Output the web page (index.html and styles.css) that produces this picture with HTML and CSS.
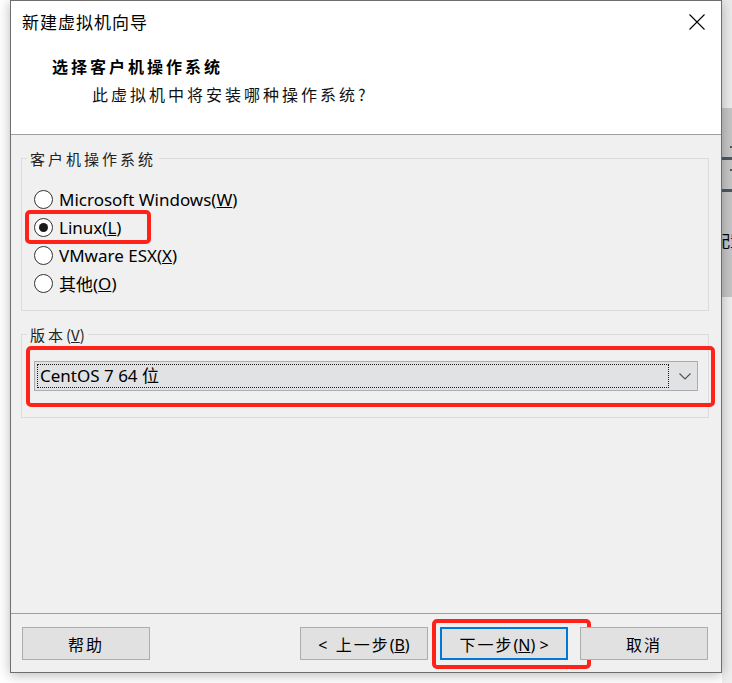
FILE: index.html
```html
<!DOCTYPE html>
<html lang="zh-CN">
  <head>
    <meta charset="utf-8" />

    <link rel="stylesheet" href="styles.css">
  </head>

  <body>
    <div class="screen">
      <div class="dialog">
        <div class="header">
          <div class="titlebar">
            <span class="title">新建虚拟机向导</span>
            <svg class="close" width="16" height="16" viewBox="0 0 16 16">
              <path d="M0.5 0.5 L15.5 15.5 M15.5 0.5 L0.5 15.5" stroke="#000" stroke-width="1.1" fill="none" />
            </svg>
          </div>
          <h1 class="heading">选择客户机操作系统</h1>
          <p class="subheading">此虚拟机中将安装哪种操作系统<span class="latin">?</span></p>
        </div>

        <div class="content">
          <div class="group">
            <div class="groupLabel">客户机操作系统</div>
            <div class="radioList">
              <div class="radioRow"><span class="radio"></span>Microsoft Windows(<u>W</u>)</div>
              <div class="radioRow"><span class="radio checked"></span>Linux(<u>L</u>)<span class="mark markLinux"></span></div>
              <div class="radioRow"><span class="radio"></span>VMware ESX(<u>X</u>)</div>
              <div class="radioRow"><span class="radio"></span>其他(<u>O</u>)</div>
            </div>
          </div>

          <div class="group version">
            <div class="groupLabel">版本<span class="latin">(<u>V</u>)</span></div>
            <div class="select">
              <div class="selectValue">CentOS 7 64 位</div>
              <svg class="chevron" width="12" height="7" viewBox="0 0 12 7">
                <path d="M0.5 0.5 L6 6 L11.5 0.5" stroke="#555" stroke-width="1.2" fill="none" />
              </svg>
              <span class="mark markSelect"></span>
            </div>
          </div>
        </div>

        <div class="footer">
          <button class="btn">帮助</button>
          <div class="spacer"></div>
          <button class="btn">&lt; 上一步<span class="latin">(<u>B</u>)</span></button>
          <button class="btn primary">下一步<span class="latin">(<u>N</u>) &gt;</span><span class="mark markNext"></span></button>
          <button class="btn">取消</button>
        </div>
      </div>

      <!-- window behind the dialog, only a sliver shows -->
      <div class="behind">
        <div class="behindTop"></div>
        <div class="behindMid">
          <div class="dot dot1"></div>
          <div class="stripe stripe1"></div>
          <div class="dot dot2"></div>
          <div class="stripe stripe2"></div>
          <div class="behindText">配置</div>
        </div>
        <div class="behindBottom"></div>
      </div>
    </div>
  </body>
</html>
```

FILE: styles.css
```css
body {
  margin: 0;
  background-color: #ffffff;
  font-family: "Noto Sans", "Noto Sans CJK SC", sans-serif;
  color: #000;
}

.screen {
  display: flex;
  width: 732px;
  height: 683px;
  padding-left: 10px;
  box-sizing: border-box;
  overflow: hidden;
}

.latin {
  letter-spacing: 0;
}

.dialog {
  position: relative;
  z-index: 1;
  flex-shrink: 0;
  display: flex;
  flex-direction: column;
  width: 712px;
  height: 673px;
  box-sizing: border-box;
  border: 1px solid #6e6e6e;
  background-color: #f0f0f0;
  box-shadow: 0 2px 12px rgba(0, 0, 0, 0.28);
}

/* header */
.header {
  height: 134px;
  box-sizing: border-box;
  background-color: #ffffff;
  border-bottom: 1px solid #a0a0a0;
}
.titlebar {
  display: flex;
  align-items: center;
  justify-content: space-between;
  height: 42px;
  padding: 0 16px 0 11px;
}
.title {
  font-family: "Noto Sans CJK SC", sans-serif;
  font-size: 17px;
  letter-spacing: 1px;
  line-height: 42px;
}
.close {
  display: block;
}
.heading {
  margin: 12px 0 0 41px;
  font-family: "Noto Sans CJK SC", sans-serif;
  font-size: 16px;
  font-weight: 700;
  letter-spacing: 3px;
  line-height: 22px;
}
.subheading {
  margin: 6px 0 0 81px;
  font-family: "Noto Sans CJK SC", sans-serif;
  font-size: 16px;
  letter-spacing: 3px;
  line-height: 22px;
  color: #111;
}

/* content */
.content {
  flex: 1;
}
.group {
  margin: 23px 12px 0 10px;
  border: 1px solid #dcdcdc;
  padding-bottom: 13px;
}
.groupLabel {
  display: table;
  margin: -10px 0 0 5px;
  padding: 0 3px;
  background-color: #f0f0f0;
  font-family: "Noto Sans CJK SC", sans-serif;
  font-size: 15px;
  letter-spacing: 3px;
  line-height: 20px;
  color: #222;
}
.radioList {
  padding: 16px 0 0 12px;
}
.radioRow {
  position: relative;
  display: flex;
  align-items: center;
  width: max-content;
  height: 28px;
  font-size: 17px;
}
.radio {
  position: relative;
  width: 19px;
  height: 19px;
  box-sizing: border-box;
  margin-right: 6px;
  border: 1px solid #333;
  border-radius: 50%;
  background-color: #ffffff;
}
.checked::after {
  content: "";
  position: absolute;
  left: 4px;
  top: 4px;
  width: 9px;
  height: 9px;
  border-radius: 50%;
  background-color: #1a1a1a;
}

.version {
  padding-bottom: 26px;
}
.select {
  position: relative;
  display: flex;
  align-items: center;
  width: 664px;
  height: 30px;
  box-sizing: border-box;
  margin: 16px 0 0 12px;
  border: 1px solid #a9adb2;
  background-color: #e1e2e4;
}
.selectValue {
  width: 632px;
  height: 24px;
  box-sizing: border-box;
  margin-left: 2px;
  padding-left: 2px;
  border: 1px dotted #1a1a1a;
  font-size: 17px;
  line-height: 22px;
}
.chevron {
  margin-left: 10px;
}

/* red annotation boxes drawn over the UI */
.mark {
  position: absolute;
  border: 4px solid #ff2218;
  border-radius: 5px;
  pointer-events: none;
}
.markLinux {
  left: -9px;
  right: -30px;
  top: -3px;
  bottom: -3px;
}
.markSelect {
  left: -9px;
  right: -18px;
  top: -16px;
  bottom: -17px;
}
.markNext {
  left: -10px;
  right: -25px;
  top: -10px;
  bottom: -11px;
}

/* footer */
.footer {
  display: flex;
  gap: 12px;
  height: 59px;
  box-sizing: border-box;
  padding: 13px 13px 0 11px;
  border-top: 1px solid #a0a0a0;
}
.spacer {
  flex: 1;
}
.btn {
  position: relative;
  width: 128px;
  height: 33px;
  margin: 0;
  padding: 0;
  border: 1px solid #adadad;
  background-color: #e1e1e1;
  font-family: "Noto Sans", "Noto Sans CJK SC", sans-serif;
  font-size: 16px;
  letter-spacing: 2px;
  color: #000;
}
.primary {
  border: 2px solid #0078d7;
}

/* sliver of the window behind */
.behind {
  display: flex;
  flex-direction: column;
  width: 10px;
  flex-shrink: 0;
  overflow: hidden;
}
.behindTop {
  height: 108px;
  background-color: #ececec;
}
.behindMid {
  height: 189px;
  background-color: #c6c6c6;
}
.behindBottom {
  flex: 1;
  background-color: #efefef;
}
.dot {
  width: 2px;
  height: 2px;
  margin-left: 8px;
  background-color: #555;
}
.dot1 {
  margin-top: 38px;
}
.dot2 {
  margin-top: 9px;
}
.stripe {
  height: 3px;
  background-color: #4b5a66;
}
.stripe1 {
  margin-top: 9px;
}
.stripe2 {
  margin-top: 18px;
}
.behindText {
  margin: 38px 0 0 -8px;
  white-space: nowrap;
  font-family: "Noto Sans CJK SC", sans-serif;
  font-size: 16px;
  line-height: 20px;
}
```
